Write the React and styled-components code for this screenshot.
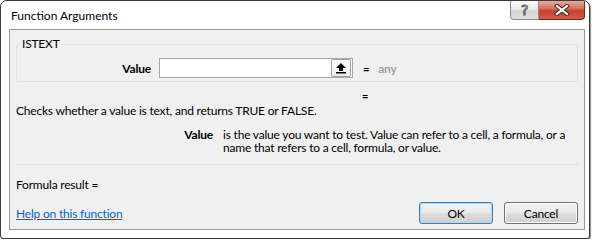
import React from 'react';
import styled, { createGlobalStyle } from 'styled-components';

const GlobalStyle = createGlobalStyle`
  html, body {
    margin: 0;
    padding: 0;
    background: #ffffff;
  }
  body {
    font-family: Lato, "Noto Sans", sans-serif;
    font-size: 12px;
    letter-spacing: -0.2px;
    color: #000000;
  }
`;

const Window = styled.div`
  box-sizing: border-box;
  width: 590px;
  height: 239px;
  display: flex;
  flex-direction: column;
  background: #ffffff;
  border: 1px solid #3a3a3a;
  border-radius: 7px 7px 3px 3px;
  box-shadow: 1px 1px 1px rgba(0, 0, 0, 0.45);
  overflow: hidden;
`;

const TitleBar = styled.div`
  height: 28px;
  display: flex;
  align-items: flex-start;
  flex-shrink: 0;
`;

const Title = styled.div`
  padding: 7px 0 0 10px;
  font-size: 12px;
  letter-spacing: 0;
  line-height: 16px;
  color: #000000;
`;

const CaptionButtons = styled.div`
  display: flex;
  margin-left: auto;
  margin-right: 4px;
`;

const CaptionButton = styled.div`
  box-sizing: border-box;
  width: ${p => p.$w}px;
  height: 19px;
  display: flex;
  align-items: center;
  justify-content: center;
  border: 1px solid ${p => (p.$close ? '#6b2a22' : '#8a8a8a')};
  border-top: none;
  border-radius: ${p => (p.$close ? '0 0 4px 0' : '0 0 0 4px')};
  background: ${p => (p.$close
    ? 'linear-gradient(#e9a99c 0%, #d77462 40%, #c4402f 55%, #d45a48 100%)'
    : 'linear-gradient(#fafafa 0%, #e9e9e9 45%, #d4d4d4 55%, #e0e0e0 100%)')};
  border-left: ${p => (p.$close ? 'none' : undefined)};
`;

const HelpGlyph = styled.span`
  font-family: "DejaVu Sans", sans-serif;
  font-size: 14px;
  line-height: 14px;
  color: #f8f8f8;
  -webkit-text-stroke: 0.9px #555555;
`;

const Client = styled.div`
  box-sizing: border-box;
  flex: 1;
  min-height: 0;
  margin: 0 4px 8px 8px;
  border: 1px solid #9a9a9a;
  background: #f0f0f0;
  padding: 0 6px 0 6px;
  display: flex;
  flex-direction: column;
`;

const Group = styled.fieldset`
  margin: 7px 0 0 0;
  padding: 7px 0 3px 0;
  border: 1px solid #dde2e6;
  border-radius: 3px;
  min-width: 0;
`;

const Legend = styled.legend`
  margin-left: 3px;
  padding: 0 2px;
  font-size: 12px;
  line-height: 14px;
`;

const ArgRow = styled.div`
  display: grid;
  grid-template-columns: 133px 193px auto auto;
  justify-content: start;
  align-items: center;
  column-gap: 10px;
`;

const ArgLabel = styled.div`
  text-align: right;
  font-weight: bold;
  margin-right: -1px;
`;

const ArgInput = styled.div`
  box-sizing: border-box;
  height: 20px;
  margin-left: -1px;
  background: #ffffff;
  border: 1px solid #a9a9a9;
  display: flex;
  justify-content: flex-end;
  padding: 0 1px 0 0;
  align-items: center;
`;

const RefButton = styled.div`
  box-sizing: border-box;
  width: 20px;
  height: 18px;
  border: 1px solid #a0a0a0;
  border-radius: 2px;
  background: linear-gradient(#ffffff, #ededed);
  display: flex;
  align-items: center;
  justify-content: center;
`;

const Equals = styled.span`
  font-weight: bold;
  font-size: 11px;
  line-height: 15px;
`;

const AnyValue = styled.span`
  color: #a0a0a0;
  font-weight: bold;
  margin-left: -1px;
`;

const ResultRow = styled.div`
  margin: 6px 0 0 346px;
  line-height: 15px;
`;

const Text = styled.div`
  line-height: 15px;
  margin-top: ${p => p.$top || 0}px;
`;

const Desc = styled.div`
  display: grid;
  grid-template-columns: 197px 1fr;
  column-gap: 10px;
  margin-top: 10px;
  line-height: 13px;
`;

const DescLabel = styled.div`
  font-weight: bold;
  text-align: right;
`;

const DescText = styled.div`
  white-space: nowrap;
`;

const Separator = styled.div`
  height: 1px;
  background: #d5dfe5;
  margin-top: 10px;
`;

const BottomRow = styled.div`
  display: flex;
  align-items: center;
  margin-top: 10px;
  gap: 11px;
`;

const HelpLink = styled.a`
  color: #0066cc;
  text-decoration: underline;
  margin-right: auto;
  cursor: pointer;
`;

const Button = styled.button`
  box-sizing: border-box;
  width: 74px;
  height: 22px;
  padding: 0;
  font-family: inherit;
  font-size: 12px;
  letter-spacing: inherit;
  color: #000000;
  border: 1px solid ${p => (p.$default ? '#3c7fb1' : '#707070')};
  border-radius: 3px;
  background: linear-gradient(#f2f2f2 0%, #ebebeb 45%, #dddddd 55%, #cfcfcf 100%);
  box-shadow: inset 0 0 0 1px ${p => (p.$default ? '#a7d8f5' : '#fcfcfc')};
`;

const UpArrow = () => (
  <svg width="12" height="12" viewBox="0 0 12 12">
    <path d="M6 1 L11 6 L8 6 L8 9 L4 9 L4 6 L1 6 Z" fill="#000" />
    <rect x="1" y="10" width="10" height="1.5" fill="#000" />
  </svg>
);

const CloseX = () => (
  <svg width="16" height="12" viewBox="0 0 16 12">
    <path d="M3 2 L13 10 M13 2 L3 10" stroke="#4a2a26" strokeWidth="4.2" strokeLinecap="square" />
    <path d="M3 2 L13 10 M13 2 L3 10" stroke="#ffffff" strokeWidth="2.2" strokeLinecap="square" />
  </svg>
);

export default function App() {
  return (
    <>
      <GlobalStyle />
      <Window>
        <TitleBar>
          <Title>Function Arguments</Title>
          <CaptionButtons>
            <CaptionButton $w={29}>
              <HelpGlyph>?</HelpGlyph>
            </CaptionButton>
            <CaptionButton $w={46} $close>
              <CloseX />
            </CaptionButton>
          </CaptionButtons>
        </TitleBar>
        <Client>
          <Group>
            <Legend>ISTEXT</Legend>
            <ArgRow>
              <ArgLabel>Value</ArgLabel>
              <ArgInput>
                <RefButton><UpArrow /></RefButton>
              </ArgInput>
              <Equals>=</Equals>
              <AnyValue>any</AnyValue>
            </ArgRow>
          </Group>
          <ResultRow><Equals>=</Equals></ResultRow>
          <Text>Checks whether a value is text, and returns TRUE or FALSE.</Text>
          <Desc>
            <DescLabel>Value</DescLabel>
            <DescText>
              is the value you want to test. Value can refer to a cell, a formula, or a<br />
              name that refers to a cell, formula, or value.
            </DescText>
          </Desc>
          <Separator />
          <Text $top={12}>Formula result =</Text>
          <BottomRow>
            <HelpLink>Help on this function</HelpLink>
            <Button $default>OK</Button>
            <Button>Cancel</Button>
          </BottomRow>
        </Client>
      </Window>
    </>
  );
}
